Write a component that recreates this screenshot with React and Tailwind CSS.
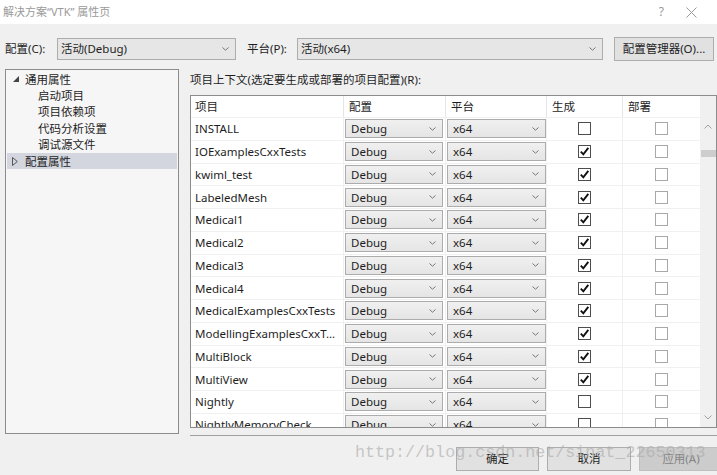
import React from "react";

const rows = [
  ["INSTALL", false],
  ["IOExamplesCxxTests", true],
  ["kwiml_test", true],
  ["LabeledMesh", true],
  ["Medical1", true],
  ["Medical2", true],
  ["Medical3", true],
  ["Medical4", true],
  ["MedicalExamplesCxxTests", true],
  ["ModellingExamplesCxxT...", true],
  ["MultiBlock", true],
  ["MultiView", true],
  ["Nightly", false],
  ["NightlyMemoryCheck", false],
];

function Chevron({ className = "" }) {
  return (
    <svg width="7" height="4" viewBox="0 0 7 4" className={className}>
      <path d="M0.5 0.5 L3.5 3.2 L6.5 0.5" fill="none" stroke="#777" strokeWidth="1" />
    </svg>
  );
}

function CellCombo({ text, width }) {
  return (
    <div
      className={`${width} ml-px h-[19px] flex items-center justify-between pl-[5px] pr-[6px] border border-[#acacac] bg-gradient-to-b from-[#f0f0f0] to-[#e5e5e5] text-[#1e1e1e]`}
    >
      <span>{text}</span>
      <Chevron />
    </div>
  );
}

function Check({ checked, light }) {
  return (
    <div
      className={`w-[13px] h-[13px] border bg-white flex items-center justify-center ${
        light ? "border-[#a8a8a8]" : "border-[#4d4d4d]"
      }`}
    >
      {checked && (
        <svg width="11" height="11" viewBox="0 0 11 11">
          <path d="M1.8 5.6 L4.3 8.3 L9.3 1.8" fill="none" stroke="#111" strokeWidth="1.9" />
        </svg>
      )}
    </div>
  );
}

export default function App() {
  return (
    <div
      className="w-[717px] h-[475px] bg-[#f0f0f0] relative overflow-hidden text-[11.5px] text-[#1e1e1e]"
      style={{ fontFamily: '"Noto Sans", "Noto Sans CJK SC", sans-serif' }}
    >
      {/* title bar */}
      <div className="h-[24px] bg-white flex items-center justify-between pl-[3px] pr-[20px] text-[#9a9a9a] text-[11px]">
        <span>解决方案“VTK” 属性页</span>
        <div className="flex items-center gap-[22px]">
          <span className="text-[12px]">?</span>
          <svg width="11" height="11" viewBox="0 0 11 11">
            <path d="M0.5 0.5 L10.5 10.5 M10.5 0.5 L0.5 10.5" stroke="#9a9a9a" strokeWidth="1" />
          </svg>
        </div>
      </div>

      {/* config row */}
      <div className="mt-[13px] h-[24px] flex items-center pl-[5px]">
        <span className="w-[52px]">配置(C):</span>
        <div className="w-[179px] h-[22px] border border-[#acacac] bg-[#e6e6e6] flex items-center justify-between pl-[3px] pr-[6px]">
          <span>活动(Debug)</span>
          <Chevron />
        </div>
        <span className="ml-[11px] w-[50px]">平台(P):</span>
        <div className="w-[306px] h-[22px] border border-[#acacac] bg-[#e6e6e6] flex items-center justify-between pl-[3px] pr-[6px]">
          <span>活动(x64)</span>
          <Chevron />
        </div>
        <button className="ml-[11px] w-[100px] h-[24px] border border-[#adadad] bg-[#e1e1e1]">
          配置管理器(O)...
        </button>
      </div>

      {/* main */}
      <div className="mt-[8px] flex h-[367px]">
        <div className="ml-[5px] w-[174px] h-[365px] border border-[#8c8c8c] bg-[#f6f6f6] pt-[1px] px-px">
          <div className="h-[16.4px] flex items-center pl-[6px]">
            <svg width="6" height="6" viewBox="0 0 6 6">
              <polygon points="6,0 6,6 0,6" fill="#444" />
            </svg>
            <span className="ml-[6px]">通用属性</span>
          </div>
          {["启动项目", "项目依赖项", "代码分析设置", "调试源文件"].map((t) => (
            <div key={t} className="h-[16.4px] flex items-center pl-[31px]">
              {t}
            </div>
          ))}
          <div className="h-[16.4px] flex items-center pl-[5px] bg-[#d3d6df]">
            <svg width="6" height="9" viewBox="0 0 6 9">
              <polygon points="0.5,0.5 5.3,4.5 0.5,8.5" fill="none" stroke="#555" strokeWidth="1" />
            </svg>
            <span className="ml-[7px]">配置属性</span>
          </div>
        </div>

        <div className="ml-[11px] w-[527px] flex flex-col">
          <div className="h-[22px] mb-[4px] flex items-center">项目上下文(选定要生成或部署的项目配置)(R):</div>
          <div className="h-[333px] border border-[#8c8c8c] bg-white flex overflow-hidden">
            <div className="w-[509px] flex flex-col overflow-hidden">
              <div className="h-[22px] shrink-0 flex border-b border-[#f0f0f0]">
                <div className="w-[153px] pl-[4px] flex items-center border-r border-[#e5e5e5]">项目</div>
                <div className="w-[102px] pl-[5px] flex items-center border-r border-[#e5e5e5]">配置</div>
                <div className="w-[101px] pl-[5px] flex items-center border-r border-[#e5e5e5]">平台</div>
                <div className="w-[76px] pl-[5px] flex items-center border-r border-[#e5e5e5]">生成</div>
                <div className="w-[77px] pl-[5px] flex items-center">部署</div>
              </div>
              {rows.map(([name, built]) => (
                <div key={name} className="h-[22.75px] shrink-0 flex border-b border-[#f0f0f0]">
                  <div className="w-[153px] pl-[4px] flex items-center border-r border-[#f0f0f0] whitespace-nowrap overflow-hidden">
                    {name}
                  </div>
                  <div className="w-[102px] flex items-center border-r border-[#f0f0f0]">
                    <CellCombo text="Debug" width="w-[98px]" />
                  </div>
                  <div className="w-[101px] flex items-center border-r border-[#f0f0f0]">
                    <CellCombo text="x64" width="w-[99px]" />
                  </div>
                  <div className="w-[76px] flex items-center justify-center border-r border-[#f0f0f0]">
                    <Check checked={built} />
                  </div>
                  <div className="w-[77px] flex items-center justify-center">
                    <Check light />
                  </div>
                </div>
              ))}
            </div>
            {/* scrollbar */}
            <div className="w-[16px] bg-[#f0f0f0] flex flex-col items-center">
              <div className="mt-[28px]">
                <svg width="8" height="5" viewBox="0 0 8 5">
                  <path d="M0.5 4.5 L4 1 L7.5 4.5" fill="none" stroke="#a0a0a0" strokeWidth="1" />
                </svg>
              </div>
              <div className="mt-[21px] w-[15px] h-[7px] bg-[#cdcdcd]" />
              <div className="flex-1" />
              <div className="mb-[7px]">
                <svg width="8" height="5" viewBox="0 0 8 5">
                  <path d="M0.5 0.5 L4 4 L7.5 0.5" fill="none" stroke="#a0a0a0" strokeWidth="1" />
                </svg>
              </div>
            </div>
          </div>
          <div className="mt-[7px] h-px bg-[#a0a0a0]" />
        </div>
      </div>

      {/* buttons */}
      <div className="mt-[11px] flex gap-[8px] pl-[456px]">
        <button className="shrink-0 w-[83px] h-[24px] border border-[#adadad] bg-[#e1e1e1]">确定</button>
        <button className="shrink-0 w-[84px] h-[24px] border border-[#adadad] bg-[#e1e1e1]">取消</button>
        <button className="shrink-0 w-[84px] h-[24px] border border-[#bfbfbf] bg-[#cccccc] text-[#838383]">应用(A)</button>
      </div>

      {/* watermark */}
      <div
        className="absolute left-[355px] top-[443px] text-[16.7px] leading-[20px] text-[#a8a8a8]/60 whitespace-nowrap pointer-events-none"
        style={{ fontFamily: '"Liberation Mono", monospace' }}
      >
        http://blog.csdn.net/sinat_22650313
      </div>
    </div>
  );
}
